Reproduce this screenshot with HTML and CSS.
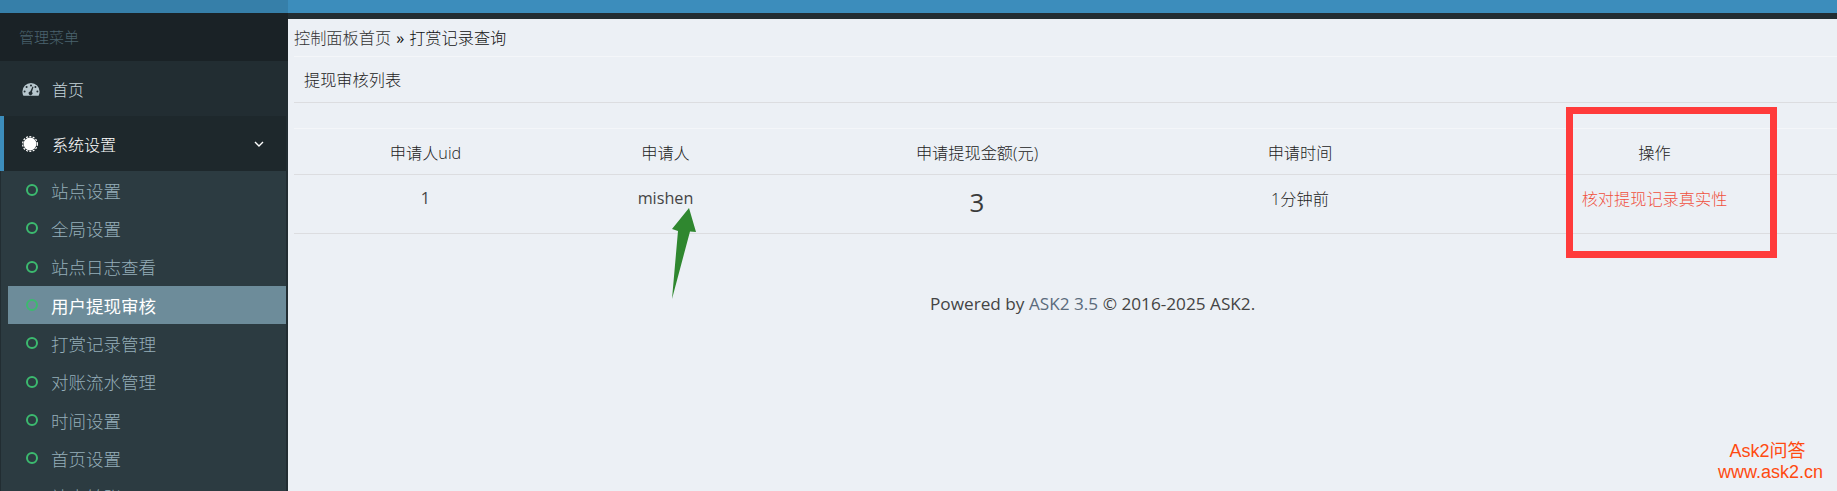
FILE: index.html
```html
<!DOCTYPE html>
<html lang="zh-CN">
<head>
    <meta charset="UTF-8">
    <title>提现审核列表</title>
    <link rel="stylesheet" href="styles.css">
</head>
<body>
    <div class="topbar">
        <div class="topbar-logo"></div>
    </div>
    <div class="wrapper">
        <aside class="sidebar">
            <div class="menu-header">管理菜单</div>
            <a class="menu-item">
                <svg class="menu-icon" viewBox="0 0 18 14" width="18" height="14">
                    <path fill="#b8c7ce" fill-rule="evenodd" d="M9 1a8.600 8.600 0 0 1 8.600 8.600c0 1.500-.4 2.900-1 4.100H1.400a8.400 8.400 0 0 1-1-4.100A8.600 8.600 0 0 1 9 1zM9 2.400a1 1 0 1 0 0 2 1 1 0 0 0 0-2zM4.600 4a1 1 0 1 0 0 2 1 1 0 0 0 0-2zM13.400 4a1 1 0 1 0 0 2 1 1 0 0 0 0-2zM2.600 8.400a1 1 0 1 0 0 2 1 1 0 0 0 0-2zM15.400 8.400a1 1 0 1 0 0 2 1 1 0 0 0 0-2zM10.600 4.600L8.200 9.400a1.900 1.900 0 1 0 1.700.5l1.600-5z"/>
                </svg>
                <span>首页</span>
            </a>
            <a class="menu-item menu-item-active">
                <svg class="menu-icon" viewBox="0 0 16 16" width="16" height="16">
                    <circle cx="8" cy="8" r="6.400" fill="#fff"/>
                    <circle cx="8" cy="8" r="7.400" fill="none" stroke="#fff" stroke-width="1.200" stroke-dasharray="2 1.400"/>
                </svg>
                <span>系统设置</span>
                <svg class="menu-caret" viewBox="0 0 10 6" width="10" height="6">
                    <path d="M1 1l4 4 4-4" fill="none" stroke="#fff" stroke-width="1.400"/>
                </svg>
            </a>
            <ul class="submenu">
                <li><i class="dot"></i>站点设置</li>
                <li><i class="dot"></i>全局设置</li>
                <li><i class="dot"></i>站点日志查看</li>
                <li class="current"><i class="dot"></i>用户提现审核</li>
                <li><i class="dot"></i>打赏记录管理</li>
                <li><i class="dot"></i>对账流水管理</li>
                <li><i class="dot"></i>时间设置</li>
                <li><i class="dot"></i>首页设置</li>
                <li><i class="dot"></i>站内转账</li>
            </ul>
        </aside>
        <main class="content">
            <div class="topline"></div>
            <div class="breadcrumb"><span class="crumb-link">控制面板首页</span><span class="crumb-sep">»</span>打赏记录查询</div>
            <div class="panel-title">提现审核列表</div>
            <div class="panel-gap"></div>
            <div class="table">
                <div class="row row-head">
                    <div>申请人uid</div>
                    <div>申请人</div>
                    <div>申请提现金额(元)</div>
                    <div>申请时间</div>
                    <div class="col-action">操作</div>
                </div>
                <div class="row row-body">
                    <div class="regular">1</div>
                    <div class="regular">mishen</div>
                    <div class="amount">3</div>
                    <div>1分钟前</div>
                    <div class="col-action"><a class="verify">核对提现记录真实性</a></div>
                </div>
            </div>
            <p class="footer">Powered by <span class="footer-link">ASK2 3.5</span> © 2016-2025 ASK2.</p>
        </main>
    </div>

    <!-- annotations painted over the screenshot -->
    <svg class="arrow" viewBox="0 0 28 94" width="28" height="94">
        <path fill="#2f872f" d="M19 0L26 24 20 23.500 2 91 8 23 2 21z"/>
    </svg>
    <div class="redbox"></div>
    <div class="watermark">
        <div class="watermark-name">Ask2问答</div>
        <div>www.ask2.cn</div>
    </div>
</body>
</html>
```

FILE: styles.css
```css
* { margin: 0; padding: 0; box-sizing: border-box; }
html, body { height: 100%; overflow: hidden; }
body {
    font-family: "Open Sans", "Noto Sans CJK SC", sans-serif;
    background: #ecf0f5;
    color: #222;
    font-size: 16.2px;
    font-weight: 300;
    position: relative;
}
.topbar {
    height: 13px;
    background: #3c8dbc;
}
.topbar-logo {
    width: 288px;
    height: 13px;
    background: #367fa9;
}
.wrapper {
    display: flex;
    height: 478px;
}

/* sidebar */
.sidebar {
    width: 288px;
    flex-shrink: 0;
    background: #222d32;
    overflow: hidden;
}
.menu-header {
    height: 48px;
    line-height: 48px;
    padding-left: 19px;
    font-size: 15px;
    color: #4b646f;
    background: #1a2226;
}
.menu-item {
    display: flex;
    align-items: center;
    height: 55px;
    padding-left: 22px;
    color: #c5d3da;
    font-size: 16px;
}
.menu-icon {
    flex-shrink: 0;
    margin-right: 12px;
}
.menu-item-active {
    margin-right: 2px;
    padding-left: 18px;
    color: #fff;
    background: #1e282c;
    border-left: 4px solid #3c8dbc;
}
.menu-item-active .menu-icon { margin-right: 14px; }
.menu-caret { margin-left: 138px; }
.submenu {
    list-style: none;
    background: #2c3b41;
    border-left: 1px solid #222d32;
    border-right: 2px solid #222d32;
    padding-left: 7px;
    height: 400px;
}
.submenu li {
    display: flex;
    align-items: center;
    height: 38.33px;
    padding-left: 18px;
    font-size: 17.5px;
    color: #95aeb9;
}
.submenu .current {
    color: #fff;
    font-weight: 400;
    background: #6d8c9a;
}
.dot {
    width: 12px;
    height: 12px;
    margin-right: 13px;
    border: 2px solid #3cba6f;
    border-radius: 50%;
}

/* main */
.content {
    flex: 1;
    padding-left: 6px;
    min-width: 0;
}
.topline {
    height: 6px;
    margin-left: -6px;
    background: #222d32;
}
.breadcrumb {
    height: 38px;
    line-height: 38px;
    border-bottom: 1px solid #f4f6f9;
    color: #111;
}
.crumb-link { color: #333; }
.crumb-sep { margin: 0 5px; font-weight: 400; }
.panel-title {
    height: 46px;
    line-height: 46px;
    padding-left: 10px;
    border-bottom: 1px solid #dcdde0;
}
.panel-gap {
    height: 26px;
    border-bottom: 1px solid #f4f6f9;
}
.row {
    display: grid;
    grid-template-columns: 263px 217px 406px 240px 1fr;
    text-align: center;
    border-bottom: 1px solid #dcdde0;
    align-items: center;
}
.row-head { height: 46px; }
.row-body { height: 59px; padding-bottom: 13px; }
.col-action { padding-left: 52px; }
.regular { font-weight: 400; color: #444; }
.amount {
    font-size: 26px;
    font-weight: 400;
    line-height: 26px;
    margin-top: 8px;
    color: #3a3a3a;
}
.verify { color: #f0503e; }
.footer {
    margin-top: 58px;
    margin-left: 636px;
    font-size: 17.2px;
    font-weight: 400;
    color: #444;
    white-space: nowrap;
}
.footer-link { color: #5b6b7c; }

/* overlays */
.arrow {
    position: absolute;
    left: 670px;
    top: 208px;
}
.redbox {
    position: absolute;
    left: 1566px;
    top: 107px;
    width: 211px;
    height: 151px;
    border: 7px solid #ff3b3b;
}
.watermark {
    position: absolute;
    right: 14px;
    top: 441px;
    font-family: "Liberation Sans", "Noto Sans CJK SC", sans-serif;
    font-size: 18px;
    font-weight: 400;
    line-height: 21px;
    color: #ff4a10;
    text-align: center;
}
.watermark-name { margin-right: 6px; }
```
